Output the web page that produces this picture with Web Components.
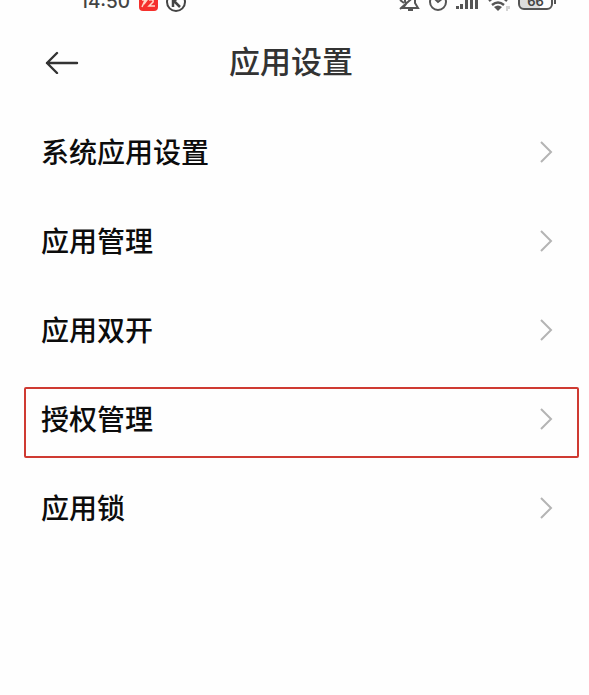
<!DOCTYPE html>
<html lang="zh-CN">
<head>
<meta charset="utf-8">
<meta name="viewport" content="width=device-width, initial-scale=1">
<title>应用设置</title>
<style>
  body {
    margin: 0;
    background: #fefefe;
    color: #0c0c0c;
    font-family: "Noto Sans", "Noto Sans CJK SC", sans-serif;
  }
</style>
</head>
<body>
<status-bar time="14:50" battery="66"></status-bar>
<page-header>应用设置</page-header>
<settings-list>
  <settings-item>系统应用设置</settings-item>
  <settings-item>应用管理</settings-item>
  <settings-item>应用双开</settings-item>
  <settings-item highlighted>授权管理</settings-item>
  <settings-item>应用锁</settings-item>
</settings-list>

<script>
class StatusBar extends HTMLElement {
  static get styles() {
    return /*css*/ `
        :host {
          display: flex;
          justify-content: space-between;
          align-items: flex-end;
          height: 14px;
          padding: 0 33px 0 80px;
          overflow: hidden;
          color: #444;
        }

        .group {
          display: flex;
          align-items: flex-end;
          gap: 8px;
        }

        .time {
          font: 500 19px/24px Inter, sans-serif;
        }

        svg {
          display: block;
          flex: none;
        }

        .battery {
          display: flex;
          align-items: center;
          padding-bottom: 4px;
        }

        .level {
          box-sizing: border-box;
          width: 35px;
          height: 20px;
          border: 2px solid #555;
          border-radius: 6px;
          background: linear-gradient(90deg, #ddd 66%, #fefefe 66%);
          font: 600 13px/18px Inter, sans-serif;
          text-align: center;
        }

        .cap {
          width: 2px;
          height: 8px;
          margin-left: 1px;
          background: #555;
        }
      `;
  }

  constructor() {
    super();
    this.attachShadow({ mode: 'open' });
  }

  connectedCallback() {
    this.render();
  }

  render() {
    this.shadowRoot.innerHTML = /*html*/ `
        <style>${StatusBar.styles}</style>
        <div class="group">
          <span class="time">${this.getAttribute('time')}</span>
          <svg width="20" height="24" viewBox="0 0 20 24" fill="none">
            <rect x="1" y="1" width="19" height="20" rx="4" fill="#f5302c"/>
            <path d="M8 8 4 17M4 10h5l-3 4M11 10q5-1 4 2l-4 4h6" stroke="#ffd9c8" stroke-width="1.5"/>
          </svg>
          <svg width="20" height="24" viewBox="0 0 20 24" fill="none" stroke="#444" stroke-width="2">
            <circle cx="10" cy="12" r="9"/>
            <path d="M7 6v11M14 6l-6 5 6 6" stroke-width="2.5"/>
          </svg>
        </div>
        <div class="group">
          <svg width="21" height="24" viewBox="0 0 21 24" fill="none" stroke="#555" stroke-width="2">
            <path d="M6 11V8q0-5 5-5t5 5v5l3 5H4l3-4zM9 20h5M1 19 19 3M1 10l4 3"/>
          </svg>
          <svg width="20" height="24" viewBox="0 0 20 24" fill="none" stroke="#555" stroke-width="2">
            <circle cx="10" cy="12" r="8"/>
            <path d="m6 8 4 4 5-4"/>
          </svg>
          <svg width="24" height="24" viewBox="0 0 24 24" fill="#555">
            <path d="M0 16h3v3H0zM4 14h3v5H4zM9 10h3v9H9zM14 6h3v13h-3zM19 4h3v15h-3z"/>
          </svg>
          <svg width="22" height="24" viewBox="0 0 22 24" fill="none" stroke="#555" stroke-width="2.4">
            <path d="M1 11q9-8 18 0M4 15q6-5 12 0"/>
            <path d="m6 17 4 4 4-4q-4-3-8 0z" fill="#555" stroke="none"/>
            <path d="M19 16v5M21 16v3" stroke="#aaa" stroke-width="1"/>
          </svg>
          <div class="battery">
            <div class="level">${this.getAttribute('battery')}</div>
            <div class="cap"></div>
          </div>
        </div>
      `;
  }
}
customElements.define('status-bar', StatusBar);

class PageHeader extends HTMLElement {
  static get styles() {
    return /*css*/ `
        :host {
          display: grid;
          grid-template-columns: 1fr auto 1fr;
          align-items: center;
          height: 96px;
          padding: 0 52px 0 45px;
          color: #333;
        }

        button {
          justify-self: start;
          padding: 0;
          border: 0;
          background: none;
          color: inherit;
          cursor: pointer;
        }

        svg {
          display: block;
        }

        h1 {
          margin: 0;
          padding-bottom: 2px;
          font-size: 31px;
          font-weight: 500;
          line-height: 40px;
        }
      `;
  }

  constructor() {
    super();
    this.attachShadow({ mode: 'open' });
  }

  connectedCallback() {
    this.render();
    this.shadowRoot.querySelector('button').addEventListener('click', () => history.back());
  }

  render() {
    this.shadowRoot.innerHTML = /*html*/ `
        <style>${PageHeader.styles}</style>
        <button type="button" aria-label="返回">
          <svg width="34" height="24" viewBox="0 0 34 24" fill="none" stroke="currentColor" stroke-width="2.4" stroke-linecap="round" stroke-linejoin="round">
            <path d="M12 3 2 13l10 10M2 13h30"/>
          </svg>
        </button>
        <h1><slot></slot></h1>
      `;
  }
}
customElements.define('page-header', PageHeader);

class SettingsList extends HTMLElement {
  constructor() {
    super();
    this.attachShadow({ mode: 'open' });
  }

  connectedCallback() {
    this.shadowRoot.innerHTML = /*html*/ `
        <style>
          :host {
            display: flex;
            flex-direction: column;
            gap: 18px;
            padding: 10px 10px 40px 24px;
          }
        </style>
        <slot></slot>
      `;
  }
}
customElements.define('settings-list', SettingsList);

class SettingsItem extends HTMLElement {
  static get styles() {
    return /*css*/ `
        :host {
          display: block;
          border: 2px solid transparent;
          border-radius: 2px;
        }

        :host([highlighted]) {
          border-color: #cf3a32;
        }

        a {
          display: flex;
          justify-content: space-between;
          align-items: center;
          padding: 10px 24px 17px 15px;
          color: inherit;
          font-size: 28px;
          font-weight: 500;
          line-height: 40px;
          text-decoration: none;
        }
      `;
  }

  constructor() {
    super();
    this.attachShadow({ mode: 'open' });
  }

  connectedCallback() {
    this.render();
  }

  render() {
    this.shadowRoot.innerHTML = /*html*/ `
        <style>${SettingsItem.styles}</style>
        <a href="#">
          <slot></slot>
          <svg width="14" height="22" viewBox="0 0 14 22" fill="none" stroke="#b4b4b4" stroke-width="2">
            <path d="m2 1 10 10L2 21"/>
          </svg>
        </a>
      `;
  }
}
customElements.define('settings-item', SettingsItem);
</script>
</body>
</html>
